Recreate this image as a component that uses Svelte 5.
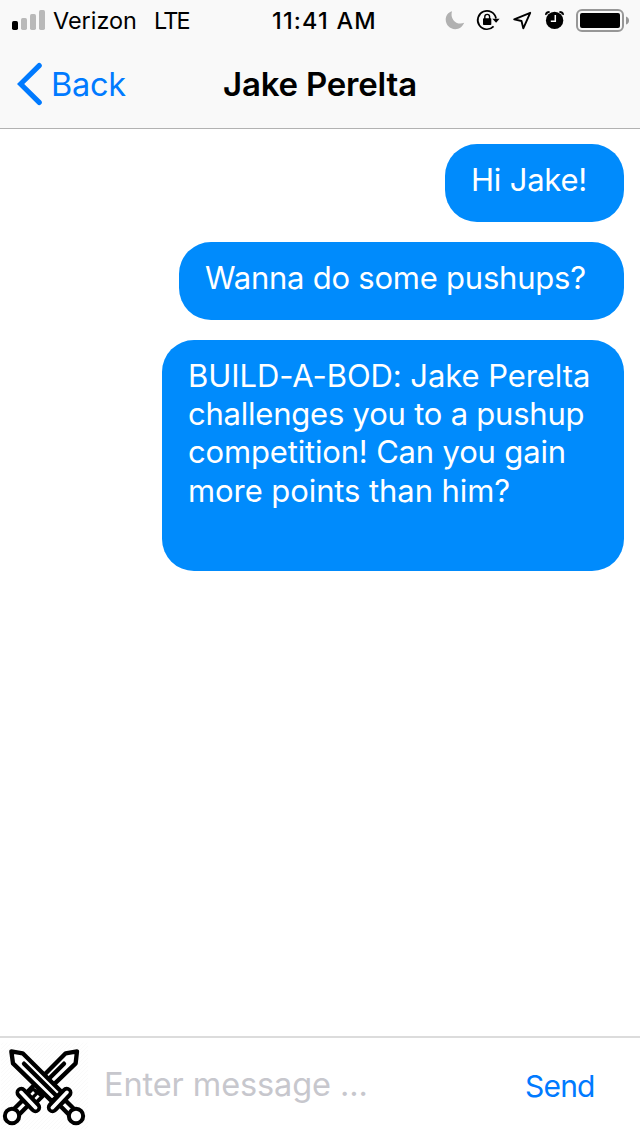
<script>
  const messages = [
    { size: 'short', lines: ['Hi Jake!'], spacing: [-0.2] },
    { size: 'medium', lines: ['Wanna do some pushups?'], spacing: [-0.23] },
    {
      size: 'long',
      lines: [
        'BUILD-A-BOD: Jake Perelta',
        'challenges you to a pushup',
        'competition! Can you gain',
        'more points than him?'
      ],
      spacing: [-0.08, -0.22, -0.17, -0.08]
    }
  ];
</script>

<div class="screen">
  <header>
    <div class="status">
      <div class="carrier">
        <svg width="34" height="20" viewBox="0 0 34 20">
          <rect x="0" y="11" width="6" height="9" rx="1.7" fill="#000" />
          <rect x="9" y="8" width="6" height="12" rx="1.7" fill="#b9b9b9" />
          <rect x="18" y="4" width="6" height="16" rx="1.7" fill="#b9b9b9" />
          <rect x="27" y="0" width="6" height="20" rx="1.7" fill="#b9b9b9" />
        </svg>
        <span class="name">Verizon</span>
        <span class="net">LTE</span>
      </div>
      <span class="time">11:41 AM</span>
      <svg class="indicators" width="200" height="40" viewBox="440 0 200 40">
        <path d="M452 11.2C448.2 12.4 445.7 15.5 445.7 19.6C445.7 25 449.9 29.2 455.2 29.2C459.3 29.2 462.7 26.6 464.2 22.8C457 26 449.5 19.2 452 11.2Z" fill="#b1b1b1" />
        <path d="M493.6 26.4A9.2 9.2 0 1 1 496 18.5" fill="none" stroke="#000" stroke-width="1.7" />
        <path d="M492.3 18.7H499.6L496.1 22.8Z" fill="#000" />
        <rect x="483" y="18.2" width="8.3" height="6.8" rx=".8" fill="#000" />
        <path d="M484.8 19V16.8A2.4 2.4 0 0 1 489.6 16.8V19" fill="none" stroke="#000" stroke-width="1.4" />
        <path d="M530.2 12.8L514.2 19.4L521.5 21L523.3 28.4Z" fill="none" stroke="#000" stroke-width="1.9" stroke-linejoin="round" />
        <circle cx="554.6" cy="20.4" r="8.7" fill="#000" />
        <path d="M544.9 14.4Q545.8 11.1 549.4 11.1L549.9 12.5Q547.4 13.2 546 15.2ZM564.1 14.4Q563.2 11.1 559.6 11.1L559.1 12.5Q561.6 13.2 563 15.2Z" fill="#000" />
        <path d="M555.3 15V21.2H550.8" fill="none" stroke="#fff" stroke-width="1.5" />
        <rect x="577" y="9.9" width="46" height="21.2" rx="5" fill="none" stroke="#979797" stroke-width="2" />
        <rect x="580" y="13" width="40" height="15" rx="2" fill="#000" />
        <path d="M626 16.5Q629 17.5 629 20.5Q629 23.5 626 24.5Z" fill="#979797" />
      </svg>
    </div>
    <nav>
      <a class="back" href="#back" aria-label="Back">
        <svg width="26" height="44" viewBox="0 0 26 44">
          <path d="M22.2 3.6L3.6 22L22.2 40.4" fill="none" stroke="#007aff" stroke-width="5.2" stroke-linecap="round" stroke-linejoin="miter" />
        </svg>
        <span>Back</span>
      </a>
      <h1>Jake Perelta</h1>
    </nav>
  </header>

  <main>
    {#each messages as message}
      <div class="bubble {message.size}">
        {#each message.lines as line, i}
          <div class="line" style:letter-spacing="{message.spacing[i]}px">{line}</div>
        {/each}
      </div>
    {/each}
  </main>

  <footer>
    <svg class="swords" width="88" height="91" viewBox="0 27 264 273" fill="#fff" stroke="#000" stroke-width="13" stroke-linejoin="round" stroke-linecap="round">
      <defs>
        <pattern id="hatch" width="12" height="12" patternUnits="userSpaceOnUse">
          <path d="M0 12L12 0" stroke="#f3f3f3" stroke-width="1.3" />
        </pattern>
      </defs>
      <rect x="3" y="38" width="261" height="260" fill="url(#hatch)" stroke="none" />
      <path d="M231 64L197 70L84 184L112 211L227 100Z" />
      <path d="M192 101L119 174" />
      <path d="M84 191L97 178L130 196L112 214Z" fill="#000" />
      <path d="M89 199L102 186M104 209L116 197" stroke="#fff" stroke-width="8" stroke-linecap="butt" />
      <path d="M34 64L68 70L185 186L156 214L39 100Z" />
      <path d="M72 101L166 194" />
      <path d="M85 226L69 210L41 238L57 254Z" />
      <path d="M179 226L195 210L223 238L207 254Z" />
      <path d="M64 188L106 232M200 188L158 232" stroke-width="35" />
      <path d="M63 187L107 233M201 187L157 233" stroke="#fff" stroke-width="11" />
      <circle cx="36" cy="258" r="21.5" stroke-width="12" />
      <circle cx="228" cy="258" r="21.5" stroke-width="12" />
    </svg>
    <span class="placeholder">Enter message ...</span>
    <span class="send">Send</span>
  </footer>
</div>

<style>
  :global(body) {
    background: #fff;
    margin: 0;
  }
  .screen {
    width: 640px;
    height: 1136px;
    display: flex;
    flex-direction: column;
    overflow: hidden;
    background: #fff;
    font-family: Inter, "Liberation Sans", sans-serif;
    color: #000;
    white-space: nowrap;
  }
  header {
    height: 128px;
    flex: none;
    background: #f9f9f9;
    border-bottom: 1px solid #b2b2b2;
  }
  .status {
    display: grid;
    grid-template-columns: 272px 168px 200px;
    height: 40px;
    font-size: 23.4px;
    line-height: 42px;
  }
  .carrier {
    display: flex;
    padding-left: 12px;
  }
  .carrier svg {
    margin-top: 10px;
  }
  .name {
    width: 102px;
    padding-left: 7px;
    box-sizing: border-box;
    letter-spacing: 0;
  }
  .net {
    padding-left: 6px;
    letter-spacing: -1.8px;
  }
  .time {
    font-weight: 500;
    letter-spacing: 1.2px;
  }
  nav {
    display: grid;
    grid-template-columns: 223px 1fr;
    height: 88px;
    line-height: 90px;
  }
  .back {
    display: flex;
    padding-left: 17px;
    color: #007aff;
    text-decoration: none;
    font-size: 32.5px;
  }
  .back svg {
    margin-top: 22px;
  }
  .back span {
    padding-left: 8px;
    letter-spacing: -0.3px;
  }
  h1 {
    margin: 0;
    font-size: 33px;
    font-weight: 600;
    line-height: 88px;
    letter-spacing: -0.2px;
  }
  main {
    flex: 1;
    display: flex;
    flex-direction: column;
    align-items: flex-end;
    gap: 20px;
    padding: 15px 16px;
  }
  .bubble {
    box-sizing: border-box;
    height: 78px;
    padding: 17px 0 0 26px;
    border-radius: 32px;
    background: #008bfc;
    color: #fff;
    font-size: 31px;
    font-weight: 400;
    line-height: 38.2px;
  }
  .short {
    width: 179px;
  }
  .medium {
    width: 445px;
  }
  .long {
    width: 462px;
    height: 231px;
  }
  footer {
    display: flex;
    height: 98px;
    border-top: 2px solid #dcdcdc;
  }
  .swords {
    margin-top: 1px;
    flex: none;
  }
  .placeholder {
    width: 421px;
    padding-left: 16px;
    box-sizing: border-box;
    color: #c7c7cd;
    font-size: 32.5px;
    line-height: 94px;
    letter-spacing: -0.1px;
  }
  .send {
    padding-left: 16px;
    color: #007aff;
    font-size: 30px;
    line-height: 97px;
    letter-spacing: -0.8px;
  }
</style>
